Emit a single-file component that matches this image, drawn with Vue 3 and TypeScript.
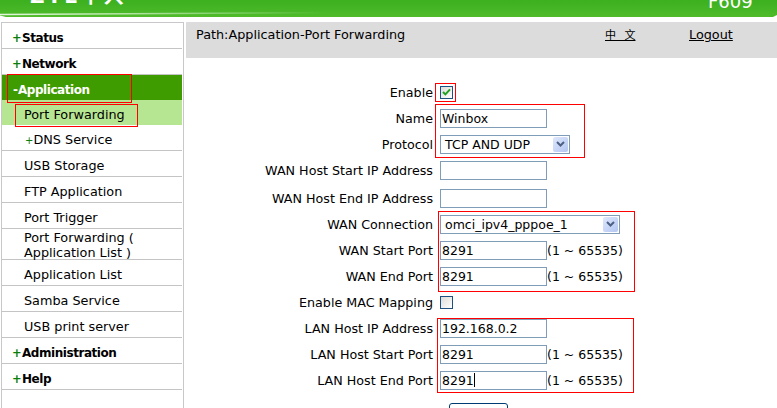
<script setup lang="ts">
interface MenuItem {
  label: string
  kind: 'top' | 'active-top' | 'active-sub' | 'sub' | 'sub-plus' | 'sub-tall'
}
interface FormRow {
  label: string
  type: 'check' | 'text' | 'select'
  value?: string
  checked?: boolean
  wide?: boolean
  range?: boolean
  caret?: boolean
  spaced?: boolean
}

const menu: MenuItem[] = [
  { label: 'Status', kind: 'top' },
  { label: 'Network', kind: 'top' },
  { label: 'Application', kind: 'active-top' },
  { label: 'Port Forwarding', kind: 'active-sub' },
  { label: 'DNS Service', kind: 'sub-plus' },
  { label: 'USB Storage', kind: 'sub' },
  { label: 'FTP Application', kind: 'sub' },
  { label: 'Port Trigger', kind: 'sub' },
  { label: 'Port Forwarding ( Application List )', kind: 'sub-tall' },
  { label: 'Application List', kind: 'sub' },
  { label: 'Samba Service', kind: 'sub' },
  { label: 'USB print server', kind: 'sub' },
  { label: 'Administration', kind: 'top' },
  { label: 'Help', kind: 'top' },
]

const rows: FormRow[] = [
  { label: 'Enable', type: 'check', checked: true },
  { label: 'Name', type: 'text', value: 'Winbox' },
  { label: 'Protocol', type: 'select', value: 'TCP AND UDP' },
  { label: 'WAN Host Start IP Address', type: 'text', value: '' },
  { label: 'WAN Host End IP Address', type: 'text', value: '', spaced: true },
  { label: 'WAN Connection', type: 'select', value: 'omci_ipv4_pppoe_1', wide: true },
  { label: 'WAN Start Port', type: 'text', value: '8291', range: true },
  { label: 'WAN End Port', type: 'text', value: '8291', range: true },
  { label: 'Enable MAC Mapping', type: 'check', checked: false },
  { label: 'LAN Host IP Address', type: 'text', value: '192.168.0.2' },
  { label: 'LAN Host Start Port', type: 'text', value: '8291', range: true },
  { label: 'LAN Host End Port', type: 'text', value: '8291', range: true, caret: true },
]
</script>

<template>
  <div class="page">
    <header class="banner">
      <span class="logo">ZTE中兴</span>
      <span class="model">F609</span>
      <svg class="swoosh" width="777" height="17" viewBox="0 0 777 17">
        <defs>
          <linearGradient id="sw" x1="0" y1="0" x2="1" y2="0">
            <stop offset="0" stop-color="#fff" stop-opacity="0.85" />
            <stop offset="0.18" stop-color="#fff" stop-opacity="0.55" />
            <stop offset="0.42" stop-color="#fff" stop-opacity="0" />
          </linearGradient>
        </defs>
        <path d="M0 14.5 C 90 14, 200 11, 777 10" fill="none" stroke="url(#sw)" stroke-width="1.4" />
        <path d="M0 15.5 L0 17 L6 17 Z" fill="#fff" />
        <path d="M777 15 L777 17 L773 17 Z" fill="#fff" />
      </svg>
    </header>
    <div class="columns">
      <nav class="side">
        <div v-for="item in menu" :key="item.label" class="mi" :class="item.kind">
          <span v-if="item.kind === 'top'" class="plus">+</span>
          <span v-if="item.kind === 'active-top'" class="dash">-</span>
          <span v-if="item.kind === 'sub-plus'" class="thin-plus">+</span>
          <span class="mi-text">{{ item.label }}</span>
        </div>
      </nav>
      <main class="main">
        <div class="pathbar">
          <span class="path">Path:Application-Port Forwarding</span>
          <a class="lang">中 文</a>
          <a class="logout">Logout</a>
        </div>
        <form class="form" @submit.prevent>
          <div v-for="r in rows" :key="r.label" class="row" :class="{ spaced: r.spaced }">
            <label class="lab">{{ r.label }}</label>
            <div class="field">
              <span v-if="r.type === 'check'" class="cb" :class="{ on: r.checked }">
                <svg v-if="r.checked" width="9" height="8" viewBox="0 0 9 8">
                  <path d="M1 4 L3.4 6.4 L8 1.4" fill="none" stroke="#21a121" stroke-width="2" />
                </svg>
              </span>
              <span v-else-if="r.type === 'text'" class="inp">{{ r.value }}<i v-if="r.caret" class="caret"></i></span>
              <span v-else class="sel" :class="{ wide: r.wide }">
                <span class="sel-val">{{ r.value }}</span>
                <span class="sel-btn">
                  <svg width="9" height="6" viewBox="0 0 9 6">
                    <path d="M1 1 L4.5 4.5 L8 1" fill="none" stroke="#4d6185" stroke-width="2" />
                  </svg>
                </span>
              </span>
              <span v-if="r.range" class="range">(1 ~ 65535)</span>
            </div>
          </div>
          <div class="actions"><span class="btn"></span></div>
        </form>
      </main>
    </div>

    <i class="mark m-app"></i>
    <i class="mark m-pf"></i>
    <i class="mark m-en"></i>
    <i class="mark m-name"></i>
    <i class="mark m-wan"></i>
    <i class="mark m-lan"></i>
  </div>
</template>

<style>
html, body { margin: 0; background: #fff; overflow: hidden; }
</style>

<style scoped>
.page {
  position: relative;
  width: 777px;
  height: 408px;
  overflow: hidden;
  font-family: "DejaVu Sans", Verdana, sans-serif;
  font-size: 12.8px;
  color: #000;
  background: #fff;
}
.banner {
  position: relative;
  height: 17px;
  overflow: hidden;
  background: linear-gradient(#3cb01f, #4fbb2b);
}
.swoosh { position: absolute; left: 0; top: 0; }
.logo {
  position: absolute;
  left: 30px;
  top: -20px;
  font-size: 20px;
  font-weight: 700;
  color: #fff;
  font-family: "DejaVu Sans", "Noto Sans CJK SC", sans-serif;
  letter-spacing: 3px;
}
.model {
  position: absolute;
  left: 708px;
  top: -9px;
  font-size: 18px;
  color: #fff;
}
.columns {
  display: flex;
  margin-top: 5px;
  align-items: flex-start;
}
.side {
  box-sizing: border-box;
  width: 183px;
  height: 400px;
  margin-left: 1px;
  border: 1px solid #c8c8c8;
  border-width: 1px 1px 0 1px;
  padding: 0 1px 0 0;
}
.mi {
  box-sizing: border-box;
  height: 26px;
  border-bottom: 1px solid #c4c4c4;
  line-height: 29px;
  white-space: nowrap;
  padding-left: 22px;
}
.top {
  padding-left: 10px;
  font-weight: 700;
  font-size: 12px;
  letter-spacing: -0.45px;
  line-height: 31px;
}
.plus {
  display: inline-block;
  width: 10px;
  color: #0a7d0a;
  font-size: 11.5px;
  letter-spacing: 0;
}
.thin-plus {
  margin-left: 1px;
  color: #0a7d0a;
  font-size: 10px;
}
.active-top {
  height: 25px;
  background: #3f9c00;
  color: #fff;
  font-weight: 700;
  font-size: 12px;
  letter-spacing: -0.45px;
  line-height: 31px;
  border-bottom: 0;
  padding-left: 11px;
}
.dash { letter-spacing: 0; }
.active-sub {
  background: #b7e693;
  border-bottom: 0;
  height: 25px;
  line-height: 29px;
}
.sub-tall {
  height: 31px;
  white-space: normal;
  line-height: 15px;
  padding-top: 1px;
  padding-right: 40px;
}
.main {
  flex: 1;
  margin-left: 2px;
}
.pathbar {
  display: flex;
  height: 36px;
  padding: 5px 0 0 10px;
  box-sizing: border-box;
  background: #dcdcdc;
}
.path { width: 409px; white-space: nowrap; }
.lang {
  width: 84px;
  text-decoration: underline;
  font-size: 11px;
  line-height: 18px;
  word-spacing: 5px;
  font-family: "DejaVu Sans", "Noto Sans CJK SC", sans-serif;
}
.logout { text-decoration: underline; }
.form { padding-top: 21px; }
.row {
  display: flex;
  align-items: center;
  height: 26px;
}
.row.spaced { margin-top: 2px; }
.lab {
  width: 247px;
  font-size: 12.7px;
  text-align: right;
  white-space: nowrap;
}
.field {
  display: flex;
  align-items: center;
  margin-left: 7px;
}
.inp {
  box-sizing: border-box;
  display: block;
  width: 107px;
  height: 19px;
  padding: 0 1px;
  line-height: 18px;
  border: 1px solid #7f9db9;
  background: #fff;
  font-size: 12.5px;
  white-space: nowrap;
}
.caret {
  display: inline-block;
  width: 1px;
  height: 14px;
  background: #000;
  vertical-align: -2px;
}
.range { font-size: 12.5px; }
.cb {
  box-sizing: border-box;
  display: flex;
  align-items: center;
  justify-content: center;
  width: 13px;
  height: 13px;
  border: 1px solid #1c5180;
  background: linear-gradient(135deg, #dcdcd7, #fff);
}
.sel {
  box-sizing: border-box;
  display: flex;
  align-items: center;
  justify-content: space-between;
  width: 130px;
  height: 19px;
  padding: 1px;
  border: 1px solid #7f9db9;
  background: #fff;
}
.sel.wide { width: 180px; }
.sel-val { padding-left: 3px; font-size: 12.5px; white-space: nowrap; }
.sel-btn {
  display: flex;
  align-items: center;
  justify-content: center;
  width: 15px;
  height: 15px;
  border-radius: 2px;
  background: linear-gradient(135deg, #dfe8fb, #b3c6f2);
}
.actions { padding: 10px 0 0 263px; }
.btn {
  box-sizing: border-box;
  display: block;
  width: 59px;
  height: 24px;
  border: 1px solid #003c74;
  border-radius: 3px;
  background: #fff;
}
.mark { position: absolute; box-sizing: border-box; border: 1px solid #f00; }
.m-app { left: 7px; top: 74px; width: 125px; height: 29px; }
.m-pf { left: 15px; top: 104px; width: 123px; height: 23px; }
.m-en { left: 435px; top: 83px; width: 21px; height: 19px; }
.m-name { left: 435px; top: 104px; width: 150px; height: 54px; }
.m-wan { left: 438px; top: 211px; width: 197px; height: 81px; }
.m-lan { left: 437px; top: 318px; width: 197px; height: 75px; }
</style>
